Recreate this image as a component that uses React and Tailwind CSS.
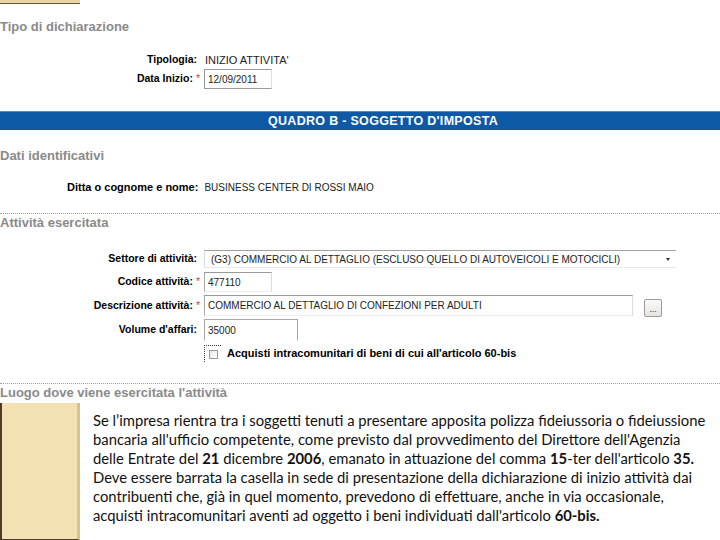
const label = "font-['Liberation_Sans',Arial,sans-serif] text-[10.5px] font-bold text-black";
const value = "font-['Liberation_Sans',Arial,sans-serif] text-[10px] text-[#222]";
const header = "font-['Liberation_Sans',Arial,sans-serif] text-[13px] leading-[16px] font-bold text-[#8a8a8a]";

function Row({ name, required, className = "", children }) {
  return (
    <div className={"flex items-center " + className}>
      <div className={"w-[200px] shrink-0 text-right " + label}>
        {name}:
        {required ? <span className="ml-[3px] text-[#e04040] font-normal">*</span> : <span className="inline-block w-[3px]" />}
      </div>
      <div className="ml-[4px] flex items-center">{children}</div>
    </div>
  );
}

function Field({ w, h, children }) {
  return (
    <div
      className={`${w} ${h} flex items-center px-[3px] border-t border-l border-t-[#9a9a9a] border-l-[#a8a8a8] border-r border-b border-r-[#dcdcdc] border-b-[#ececec] bg-white ${value}`}
    >
      {children}
    </div>
  );
}

export default function App() {
  return (
    <div className="w-[720px] h-[540px] overflow-hidden bg-white">
      <div className="w-[80px] h-[4px] bg-[#e9d6a4] border-b border-[#6b5a3a]" />

      <div className={"mt-[15px] " + header}>Tipo di dichiarazione</div>

      <Row name="Tipologia" className="mt-[16px] h-[18px]">
        <span className={value + " text-[11px] ml-[1px]"}>INIZIO ATTIVITA'</span>
      </Row>
      <Row name="Data Inizio" required className="h-[20px]">
        <div className={`w-[68px] h-[20px] flex items-center px-[3px] border border-[#9a9a9a] border-r-[#e0e0e0] bg-white ${value}`}>
          12/09/2011
        </div>
      </Row>

      <div className="mt-[22px] h-[19px] bg-[#0d59a6] border-t border-[#4a8ad0] flex items-center justify-center pl-[46px]">
        <span className="font-['Liberation_Sans',Arial,sans-serif] text-[12.5px] font-bold text-white tracking-[0.3px]">
          QUADRO B - SOGGETTO D'IMPOSTA
        </span>
      </div>

      <div className={"mt-[18px] " + header}>Dati identificativi</div>

      <div className="mt-[14px] h-[18px] flex items-center pl-[67px]">
        <span className={label + " text-[11px]"}>Ditta o cognome e nome:</span>
        <span className={value + " ml-[6px]"}>BUSINESS CENTER DI ROSSI MAIO</span>
      </div>

      <div className="mt-[17px] border-t border-dotted border-[#a0a0a0]" />
      <div className={"mt-[1px] " + header}>Attività esercitata</div>

      <Row name="Settore di attività" className="mt-[19px] h-[18px]">
        <div className={`w-[472px] h-[18px] flex items-center justify-between pl-[6px] pr-[6px] border-t border-[#a0a0a0] border-l border-l-[#d8d8d8] border-b border-b-[#e8e8e8] bg-white ${value} text-[9.5px]`}>
          <span>(G3) COMMERCIO AL DETTAGLIO (ESCLUSO QUELLO DI AUTOVEICOLI E MOTOCICLI)</span>
          <span className="w-0 h-0 border-l-[2.5px] border-r-[2.5px] border-t-[3px] border-l-transparent border-r-transparent border-t-[#333]" />
        </div>
      </Row>
      <Row name="Codice attività" required className="mt-[4px] h-[20px]">
        <Field w="w-[68px]" h="h-[20px]">477110</Field>
      </Row>
      <Row name="Descrizione attività" required className="mt-[3px] h-[21px]">
        <Field w="w-[429px]" h="h-[21px]">
          <span className="text-[10px]">COMMERCIO AL DETTAGLIO DI CONFEZIONI PER ADULTI</span>
        </Field>
        <button className="ml-[11px] mt-[4px] w-[18px] h-[18px] rounded-[2px] border border-[#9a9a9a] bg-gradient-to-b from-[#fafafa] to-[#e4e4e4] flex items-end justify-center pb-[3px] text-[9px] leading-none text-[#333]">
          ...
        </button>
      </Row>
      <Row name="Volume d'affari" className="mt-[3px] h-[22px]">
        <div className={`w-[94px] h-[22px] flex items-center px-[3px] border-t border-l border-r border-[#a8a8a8] border-b border-b-transparent bg-white ${value}`}>
          35000
        </div>
      </Row>

      <div className="mt-[4px] h-[17px] flex items-center pl-[204px]">
        <div className="w-[17px] h-[17px] border-t border-l border-dotted border-[#333] flex items-center justify-center">
          <div className="w-[9px] h-[9px] border border-[#9a9a9a] bg-gradient-to-br from-[#e8e8e8] to-[#ffffff]" />
        </div>
        <span className={label + " ml-[6px] text-[11px]"}>
          Acquisti intracomunitari di beni di cui all'articolo 60-bis
        </span>
      </div>

      <div className="mt-[21px] border-t border-dotted border-[#a0a0a0]" />
      <div className={"mt-[1px] " + header}>Luogo dove viene esercitata l'attività</div>

      <div className="mt-[2px] flex h-[137px]">
        <div className="w-[80px] shrink-0 bg-[#f4e1b3] border-l-2 border-[#4a3c28] border-r-[3px] border-r-[#d6c393] border-b border-b-[#4a3c28]" />
        <p className="ml-[13px] pt-[8px] font-['Lato','Open_Sans',sans-serif] text-[14.8px] leading-[19px] text-[#111] whitespace-nowrap">
          Se l’impresa rientra tra i soggetti tenuti a presentare apposita polizza fideiussoria o fideiussione
          <br />
          bancaria all'ufficio competente, come previsto dal provvedimento del Direttore dell'Agenzia
          <br />
          delle Entrate del <b>21</b> dicembre <b>2006</b>, emanato in attuazione del comma <b>15</b>-ter dell'articolo <b>35.</b>
          <br />
          Deve essere barrata la casella in sede di presentazione della dichiarazione di inizio attività dai
          <br />
          contribuenti che, già in quel momento, prevedono di effettuare, anche in via occasionale,
          <br />
          acquisti intracomunitari aventi ad oggetto i beni individuati dall'articolo <b>60-bis.</b>
        </p>
      </div>
    </div>
  );
}
